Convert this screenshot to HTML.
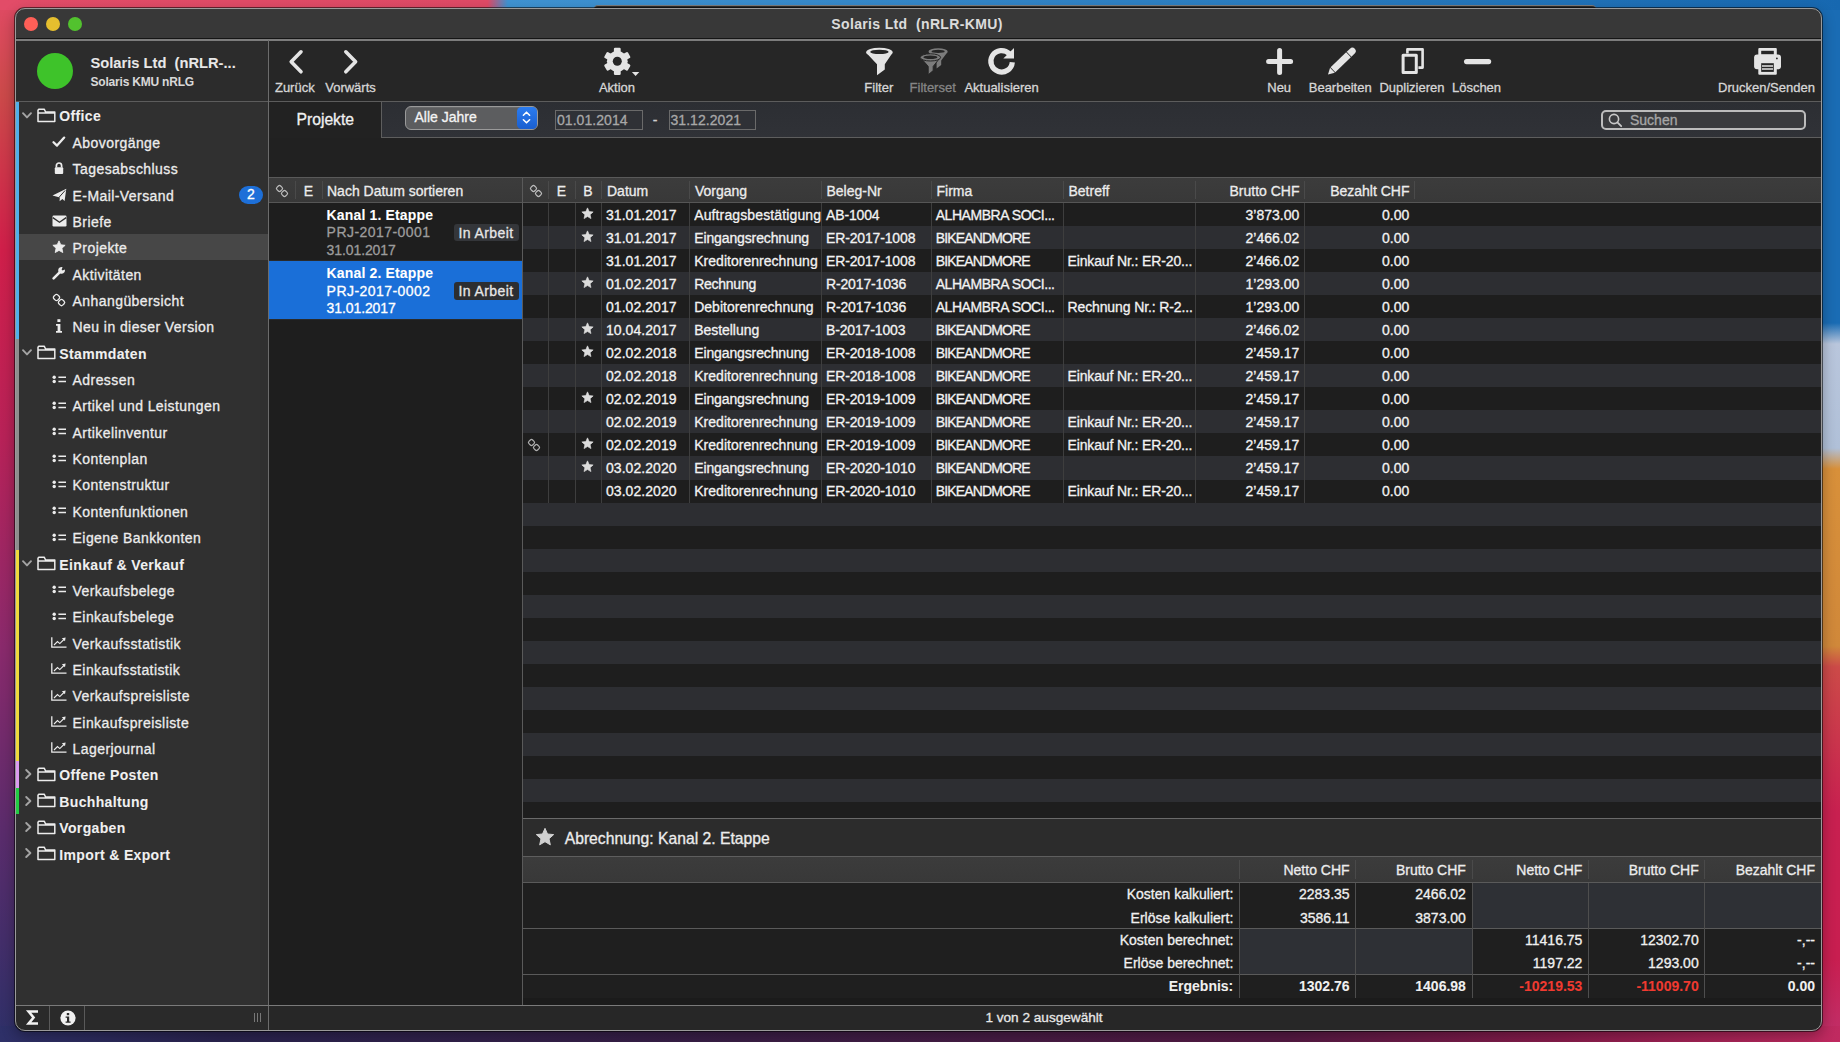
<!DOCTYPE html><html><head><meta charset="utf-8"><style>
*{margin:0;padding:0;box-sizing:border-box}
html,body{width:1840px;height:1042px;overflow:hidden}
body{position:relative;font-family:"Liberation Sans",sans-serif;background:#b02a5a}
div{position:absolute}
.t{white-space:pre;-webkit-text-stroke:0.3px currentColor}
.b{-webkit-text-stroke:0.05px currentColor}
svg{position:absolute;overflow:visible}
</style></head><body><div style="left:0;top:0;width:1840px;height:1042px;background:linear-gradient(180deg,#e04a64 0%,#cc4a4a 9%,#d01f4a 24%,#b82258 42%,#8a2a6c 62%,#5a2c6c 80%,#2e3068 100%)"></div>
<div style="left:1700px;top:0;width:140px;height:1042px;background:linear-gradient(180deg,#1a6cb4 0%,#1a6cb4 31%,#b9c6dc 33%,#b0c0d8 43%,#d8903a 45%,#d0883a 62%,#cc4a48 64%,#c82050 78%,#c81e50 92%,#c0306a 100%)"></div>
<div style="left:0;top:0;width:1840px;height:10px;background:linear-gradient(93deg,#e24c68 0%,#df4a66 26.5%,#3f93d2 27.6%,#2a7cc0 70%,#1768b0 100%)"></div>
<div style="left:0;top:1026px;width:1840px;height:16px;background:linear-gradient(90deg,#2e3068 0%,#2a2450 12%,#3a1e46 40%,#561a44 70%,#8a1c4c 85%,#c02a60 100%)"></div>
<div style="left:594px;top:5px;width:1002px;height:10px;background:#2b2b2b;border-radius:4px 4px 0 0;border-top:1px solid #7a7a7a"></div>
<div id="win" style="left:15px;top:8px;width:1807px;height:1023px;border-radius:10px;overflow:hidden;background:#1f1f1f">
<div style="left:-15px;top:-8px;width:1840px;height:1042px">
<div style="left:15px;top:8px;width:1807px;height:31px;background:#383838"></div>
<div style="left:15px;top:38px;width:1807px;height:1px;background:#151515"></div>
<div style="left:15px;top:39px;width:1807px;height:1.5px;background:#7c7c7c"></div>
<div style="left:23.7px;top:16.8px;width:14px;height:14px;border-radius:50%;background:#fe5f57"></div>
<div style="left:45.7px;top:16.8px;width:14px;height:14px;border-radius:50%;background:#e6bf2e"></div>
<div style="left:67.7px;top:16.8px;width:14px;height:14px;border-radius:50%;background:#52c22e"></div>
<div class="t b" style="top:15.75px;font-size:14px;line-height:16.8px;font-weight:700;color:#dcdcdc;letter-spacing:0.35px;left:517px;width:800px;text-align:center;">Solaris Ltd  (nRLR-KMU)</div>
<div style="left:15px;top:40.5px;width:253px;height:61px;background:#2c2c2c"></div>
<div style="left:269px;top:40.5px;width:1553px;height:61px;background:#262626"></div>
<div style="left:15px;top:101px;width:1807px;height:1px;background:#5c5c5c"></div>
<div style="left:268px;top:40px;width:1px;height:990px;background:#6c6c6c"></div>
<div style="left:37px;top:53px;width:36px;height:36px;border-radius:50%;background:#3ec32a"></div>
<div class="t b" style="top:54.89px;font-size:14.7px;line-height:17.64px;font-weight:700;color:#e8e8e8;left:90.5px;">Solaris Ltd  (nRLR-...</div>
<div class="t b" style="top:74.64px;font-size:12px;line-height:14.4px;font-weight:700;color:#d8d8d8;letter-spacing:-0.2px;left:90.5px;">Solaris KMU nRLG</div>
<div style="left:15px;top:102px;width:253px;height:903px;background:#303030"></div>
<div style="left:19px;top:234.0px;width:249px;height:26.36px;background:#474747"></div>
<div style="left:16px;top:102.2px;width:3px;height:237.24px;background:#4fb0ec"></div>
<div style="left:16px;top:339.44px;width:3px;height:210.88px;background:#8e8e8e"></div>
<div style="left:16px;top:550.32px;width:3px;height:210.88px;background:#f0da3c"></div>
<div style="left:16px;top:761.2px;width:3px;height:26.36px;background:#dc9cf0"></div>
<div style="left:16px;top:787.5600000000001px;width:3px;height:26.36px;background:#22cc44"></div>
<svg style="left:22.2px;top:111.7px" width="10" height="7" viewBox="0 0 10 7"><path d="M1 1.2 L5 5.4 L9 1.2" fill="none" stroke="#a4a4a4" stroke-width="1.9" stroke-linecap="round" stroke-linejoin="round"/></svg>
<svg style="left:36.5px;top:108.0px" width="19" height="15" viewBox="0 0 19 15"><path d="M1 2.2 V13.6 H17.8 V4 H8.6 L7.2 1.2 H1.8 Z M1 5 H17.8" fill="none" stroke="#ececec" stroke-width="1.5" stroke-linejoin="round"/></svg>
<div class="t b" style="top:108.45px;font-size:14px;line-height:16.8px;font-weight:700;color:#f0f0f0;letter-spacing:0.35px;left:59.3px;">Office</div>
<svg style="left:52px;top:134.56px" width="14" height="14" viewBox="0 0 14 14"><path d="M1.5 7.2 L5 10.6 L12.2 2.6" fill="none" stroke="#ececec" stroke-width="2.3" stroke-linecap="round" stroke-linejoin="round"/></svg>
<div class="t" style="top:134.81px;font-size:14px;line-height:16.8px;font-weight:400;color:#ececec;letter-spacing:0.42px;left:72.6px;">Abovorgänge</div>
<svg style="left:52px;top:160.92000000000002px" width="14" height="14" viewBox="0 0 14 14"><path d="M4.4 6.5 V4.6 A2.6 2.6 0 0 1 9.6 4.6 V6.5" fill="none" stroke="#ececec" stroke-width="1.7"/><rect x="2.8" y="6.3" width="8.4" height="6.6" rx="1" fill="#ececec"/></svg>
<div class="t" style="top:161.17px;font-size:14px;line-height:16.8px;font-weight:400;color:#ececec;letter-spacing:0.42px;left:72.6px;">Tagesabschluss</div>
<svg style="left:51.5px;top:187.78px" width="15" height="14" viewBox="0 0 15 14"><path d="M0.5 7.6 L14.3 0.8 L12.6 13 L10.4 11 L7.6 13.2 L7.8 9.4 Z" fill="#ececec"/><path d="M6.8 9.6 L13.2 2.4" stroke="#2e2e2e" stroke-width="1"/></svg>
<div class="t" style="top:187.53px;font-size:14px;line-height:16.8px;font-weight:400;color:#ececec;letter-spacing:0.42px;left:72.6px;">E-Mail-Versand</div>
<svg style="left:51.5px;top:214.83999999999997px" width="15" height="12" viewBox="0 0 15 12"><rect x="0.5" y="0.5" width="14" height="11" rx="1.2" fill="#ececec"/><path d="M0.8 2.6 L7.5 7.2 L14.2 2.6" fill="none" stroke="#2e2e2e" stroke-width="1.3"/></svg>
<div class="t" style="top:213.89px;font-size:14px;line-height:16.8px;font-weight:400;color:#ececec;letter-spacing:0.42px;left:72.6px;">Briefe</div>
<svg style="left:51.5px;top:240.0px" width="14" height="14" viewBox="0 0 24 24"><path d="M12 1.5 L15.1 8.3 L22.5 9.1 L17 14.1 L18.5 21.5 L12 17.8 L5.5 21.5 L7 14.1 L1.5 9.1 L8.9 8.3 Z" fill="#ececec" stroke="#ececec" stroke-width="1.5" stroke-linejoin="round"/></svg>
<div class="t" style="top:240.25px;font-size:14px;line-height:16.8px;font-weight:400;color:#ececec;letter-spacing:0.42px;left:72.6px;">Projekte</div>
<svg style="left:51.8px;top:266.36px" width="14" height="14" viewBox="0 0 14 14"><path d="M1.6 12.4 L7.4 6.6" stroke="#ececec" stroke-width="2.6" stroke-linecap="round"/><path d="M10.6 1.2 A3.4 3.4 0 1 0 12.8 3.4 L10.6 4.4 L9.6 3.4 Z" fill="#ececec"/></svg>
<div class="t" style="top:266.61px;font-size:14px;line-height:16.8px;font-weight:400;color:#ececec;letter-spacing:0.42px;left:72.6px;">Aktivitäten</div>
<svg style="left:51.8px;top:292.71999999999997px" width="14" height="14" viewBox="0 0 14 14"><rect x="1.8" y="1.8" width="5.4" height="5.4" rx="1.7" transform="rotate(45 4.5 4.5)" fill="none" stroke="#ececec" stroke-width="1.3"/><rect x="6.8" y="6.8" width="5.4" height="5.4" rx="1.7" transform="rotate(45 9.5 9.5)" fill="none" stroke="#ececec" stroke-width="1.3"/></svg>
<div class="t" style="top:292.97px;font-size:14px;line-height:16.8px;font-weight:400;color:#ececec;letter-spacing:0.42px;left:72.6px;">Anhangübersicht</div>
<svg style="left:55px;top:319.28px" width="8" height="14" viewBox="0 0 8 14"><rect x="2.4" y="0.2" width="3" height="2.8" fill="#ececec"/><path d="M1 5 H5.4 V12 H7 V13.8 H1 V12 H2.6 V6.8 H1 Z" fill="#ececec"/></svg>
<div class="t" style="top:319.33px;font-size:14px;line-height:16.8px;font-weight:400;color:#ececec;letter-spacing:0.42px;left:72.6px;">Neu in dieser Version</div>
<svg style="left:22.2px;top:348.94px" width="10" height="7" viewBox="0 0 10 7"><path d="M1 1.2 L5 5.4 L9 1.2" fill="none" stroke="#a4a4a4" stroke-width="1.9" stroke-linecap="round" stroke-linejoin="round"/></svg>
<svg style="left:36.5px;top:345.24px" width="19" height="15" viewBox="0 0 19 15"><path d="M1 2.2 V13.6 H17.8 V4 H8.6 L7.2 1.2 H1.8 Z M1 5 H17.8" fill="none" stroke="#ececec" stroke-width="1.5" stroke-linejoin="round"/></svg>
<div class="t b" style="top:345.69px;font-size:14px;line-height:16.8px;font-weight:700;color:#f0f0f0;letter-spacing:0.35px;left:59.3px;">Stammdaten</div>
<svg style="left:52px;top:374.6px" width="15" height="9" viewBox="0 0 15 9"><circle cx="2.2" cy="2.3" r="1.7" fill="#ececec"/><circle cx="2.2" cy="6.5" r="1.7" fill="#ececec"/><path d="M6.4 2.3 H14 M6.4 6.5 H14" stroke="#ececec" stroke-width="1.6"/></svg>
<div class="t" style="top:372.05px;font-size:14px;line-height:16.8px;font-weight:400;color:#ececec;letter-spacing:0.42px;left:72.6px;">Adressen</div>
<svg style="left:52px;top:400.96px" width="15" height="9" viewBox="0 0 15 9"><circle cx="2.2" cy="2.3" r="1.7" fill="#ececec"/><circle cx="2.2" cy="6.5" r="1.7" fill="#ececec"/><path d="M6.4 2.3 H14 M6.4 6.5 H14" stroke="#ececec" stroke-width="1.6"/></svg>
<div class="t" style="top:398.41px;font-size:14px;line-height:16.8px;font-weight:400;color:#ececec;letter-spacing:0.42px;left:72.6px;">Artikel und Leistungen</div>
<svg style="left:52px;top:427.32px" width="15" height="9" viewBox="0 0 15 9"><circle cx="2.2" cy="2.3" r="1.7" fill="#ececec"/><circle cx="2.2" cy="6.5" r="1.7" fill="#ececec"/><path d="M6.4 2.3 H14 M6.4 6.5 H14" stroke="#ececec" stroke-width="1.6"/></svg>
<div class="t" style="top:424.77px;font-size:14px;line-height:16.8px;font-weight:400;color:#ececec;letter-spacing:0.42px;left:72.6px;">Artikelinventur</div>
<svg style="left:52px;top:453.68px" width="15" height="9" viewBox="0 0 15 9"><circle cx="2.2" cy="2.3" r="1.7" fill="#ececec"/><circle cx="2.2" cy="6.5" r="1.7" fill="#ececec"/><path d="M6.4 2.3 H14 M6.4 6.5 H14" stroke="#ececec" stroke-width="1.6"/></svg>
<div class="t" style="top:451.13px;font-size:14px;line-height:16.8px;font-weight:400;color:#ececec;letter-spacing:0.42px;left:72.6px;">Kontenplan</div>
<svg style="left:52px;top:480.03999999999996px" width="15" height="9" viewBox="0 0 15 9"><circle cx="2.2" cy="2.3" r="1.7" fill="#ececec"/><circle cx="2.2" cy="6.5" r="1.7" fill="#ececec"/><path d="M6.4 2.3 H14 M6.4 6.5 H14" stroke="#ececec" stroke-width="1.6"/></svg>
<div class="t" style="top:477.49px;font-size:14px;line-height:16.8px;font-weight:400;color:#ececec;letter-spacing:0.42px;left:72.6px;">Kontenstruktur</div>
<svg style="left:52px;top:506.4px" width="15" height="9" viewBox="0 0 15 9"><circle cx="2.2" cy="2.3" r="1.7" fill="#ececec"/><circle cx="2.2" cy="6.5" r="1.7" fill="#ececec"/><path d="M6.4 2.3 H14 M6.4 6.5 H14" stroke="#ececec" stroke-width="1.6"/></svg>
<div class="t" style="top:503.85px;font-size:14px;line-height:16.8px;font-weight:400;color:#ececec;letter-spacing:0.42px;left:72.6px;">Kontenfunktionen</div>
<svg style="left:52px;top:532.76px" width="15" height="9" viewBox="0 0 15 9"><circle cx="2.2" cy="2.3" r="1.7" fill="#ececec"/><circle cx="2.2" cy="6.5" r="1.7" fill="#ececec"/><path d="M6.4 2.3 H14 M6.4 6.5 H14" stroke="#ececec" stroke-width="1.6"/></svg>
<div class="t" style="top:530.21px;font-size:14px;line-height:16.8px;font-weight:400;color:#ececec;letter-spacing:0.42px;left:72.6px;">Eigene Bankkonten</div>
<svg style="left:22.2px;top:559.82px" width="10" height="7" viewBox="0 0 10 7"><path d="M1 1.2 L5 5.4 L9 1.2" fill="none" stroke="#a4a4a4" stroke-width="1.9" stroke-linecap="round" stroke-linejoin="round"/></svg>
<svg style="left:36.5px;top:556.12px" width="19" height="15" viewBox="0 0 19 15"><path d="M1 2.2 V13.6 H17.8 V4 H8.6 L7.2 1.2 H1.8 Z M1 5 H17.8" fill="none" stroke="#ececec" stroke-width="1.5" stroke-linejoin="round"/></svg>
<div class="t b" style="top:556.57px;font-size:14px;line-height:16.8px;font-weight:700;color:#f0f0f0;letter-spacing:0.35px;left:59.3px;">Einkauf &amp; Verkauf</div>
<svg style="left:52px;top:585.48px" width="15" height="9" viewBox="0 0 15 9"><circle cx="2.2" cy="2.3" r="1.7" fill="#ececec"/><circle cx="2.2" cy="6.5" r="1.7" fill="#ececec"/><path d="M6.4 2.3 H14 M6.4 6.5 H14" stroke="#ececec" stroke-width="1.6"/></svg>
<div class="t" style="top:582.93px;font-size:14px;line-height:16.8px;font-weight:400;color:#ececec;letter-spacing:0.42px;left:72.6px;">Verkaufsbelege</div>
<svg style="left:52px;top:611.8399999999999px" width="15" height="9" viewBox="0 0 15 9"><circle cx="2.2" cy="2.3" r="1.7" fill="#ececec"/><circle cx="2.2" cy="6.5" r="1.7" fill="#ececec"/><path d="M6.4 2.3 H14 M6.4 6.5 H14" stroke="#ececec" stroke-width="1.6"/></svg>
<div class="t" style="top:609.29px;font-size:14px;line-height:16.8px;font-weight:400;color:#ececec;letter-spacing:0.42px;left:72.6px;">Einkaufsbelege</div>
<svg style="left:50.8px;top:637.0000000000001px" width="16" height="11" viewBox="0 0 16 11"><path d="M0.8 0.3 V10.2 H15.5" fill="none" stroke="#ececec" stroke-width="1.3"/><path d="M3 8 L6.5 4.6 L8.8 6.6 L13.4 2" fill="none" stroke="#ececec" stroke-width="1.1"/><path d="M10.8 1.2 L14.6 0.4 L14 4.2 Z" fill="#ececec"/></svg>
<div class="t" style="top:635.65px;font-size:14px;line-height:16.8px;font-weight:400;color:#ececec;letter-spacing:0.42px;left:72.6px;">Verkaufsstatistik</div>
<svg style="left:50.8px;top:663.36px" width="16" height="11" viewBox="0 0 16 11"><path d="M0.8 0.3 V10.2 H15.5" fill="none" stroke="#ececec" stroke-width="1.3"/><path d="M3 8 L6.5 4.6 L8.8 6.6 L13.4 2" fill="none" stroke="#ececec" stroke-width="1.1"/><path d="M10.8 1.2 L14.6 0.4 L14 4.2 Z" fill="#ececec"/></svg>
<div class="t" style="top:662.01px;font-size:14px;line-height:16.8px;font-weight:400;color:#ececec;letter-spacing:0.42px;left:72.6px;">Einkaufsstatistik</div>
<svg style="left:50.8px;top:689.72px" width="16" height="11" viewBox="0 0 16 11"><path d="M0.8 0.3 V10.2 H15.5" fill="none" stroke="#ececec" stroke-width="1.3"/><path d="M3 8 L6.5 4.6 L8.8 6.6 L13.4 2" fill="none" stroke="#ececec" stroke-width="1.1"/><path d="M10.8 1.2 L14.6 0.4 L14 4.2 Z" fill="#ececec"/></svg>
<div class="t" style="top:688.37px;font-size:14px;line-height:16.8px;font-weight:400;color:#ececec;letter-spacing:0.42px;left:72.6px;">Verkaufspreisliste</div>
<svg style="left:50.8px;top:716.08px" width="16" height="11" viewBox="0 0 16 11"><path d="M0.8 0.3 V10.2 H15.5" fill="none" stroke="#ececec" stroke-width="1.3"/><path d="M3 8 L6.5 4.6 L8.8 6.6 L13.4 2" fill="none" stroke="#ececec" stroke-width="1.1"/><path d="M10.8 1.2 L14.6 0.4 L14 4.2 Z" fill="#ececec"/></svg>
<div class="t" style="top:714.73px;font-size:14px;line-height:16.8px;font-weight:400;color:#ececec;letter-spacing:0.42px;left:72.6px;">Einkaufspreisliste</div>
<svg style="left:50.8px;top:742.44px" width="16" height="11" viewBox="0 0 16 11"><path d="M0.8 0.3 V10.2 H15.5" fill="none" stroke="#ececec" stroke-width="1.3"/><path d="M3 8 L6.5 4.6 L8.8 6.6 L13.4 2" fill="none" stroke="#ececec" stroke-width="1.1"/><path d="M10.8 1.2 L14.6 0.4 L14 4.2 Z" fill="#ececec"/></svg>
<div class="t" style="top:741.09px;font-size:14px;line-height:16.8px;font-weight:400;color:#ececec;letter-spacing:0.42px;left:72.6px;">Lagerjournal</div>
<svg style="left:24.5px;top:769.2px" width="7" height="10" viewBox="0 0 7 10"><path d="M1.2 1 L5.4 5 L1.2 9" fill="none" stroke="#a4a4a4" stroke-width="1.9" stroke-linecap="round" stroke-linejoin="round"/></svg>
<svg style="left:36.5px;top:767.0px" width="19" height="15" viewBox="0 0 19 15"><path d="M1 2.2 V13.6 H17.8 V4 H8.6 L7.2 1.2 H1.8 Z M1 5 H17.8" fill="none" stroke="#ececec" stroke-width="1.5" stroke-linejoin="round"/></svg>
<div class="t b" style="top:767.45px;font-size:14px;line-height:16.8px;font-weight:700;color:#f0f0f0;letter-spacing:0.35px;left:59.3px;">Offene Posten</div>
<svg style="left:24.5px;top:795.5600000000001px" width="7" height="10" viewBox="0 0 7 10"><path d="M1.2 1 L5.4 5 L1.2 9" fill="none" stroke="#a4a4a4" stroke-width="1.9" stroke-linecap="round" stroke-linejoin="round"/></svg>
<svg style="left:36.5px;top:793.36px" width="19" height="15" viewBox="0 0 19 15"><path d="M1 2.2 V13.6 H17.8 V4 H8.6 L7.2 1.2 H1.8 Z M1 5 H17.8" fill="none" stroke="#ececec" stroke-width="1.5" stroke-linejoin="round"/></svg>
<div class="t b" style="top:793.81px;font-size:14px;line-height:16.8px;font-weight:700;color:#f0f0f0;letter-spacing:0.35px;left:59.3px;">Buchhaltung</div>
<svg style="left:24.5px;top:821.9200000000001px" width="7" height="10" viewBox="0 0 7 10"><path d="M1.2 1 L5.4 5 L1.2 9" fill="none" stroke="#a4a4a4" stroke-width="1.9" stroke-linecap="round" stroke-linejoin="round"/></svg>
<svg style="left:36.5px;top:819.72px" width="19" height="15" viewBox="0 0 19 15"><path d="M1 2.2 V13.6 H17.8 V4 H8.6 L7.2 1.2 H1.8 Z M1 5 H17.8" fill="none" stroke="#ececec" stroke-width="1.5" stroke-linejoin="round"/></svg>
<div class="t b" style="top:820.17px;font-size:14px;line-height:16.8px;font-weight:700;color:#f0f0f0;letter-spacing:0.35px;left:59.3px;">Vorgaben</div>
<svg style="left:24.5px;top:848.28px" width="7" height="10" viewBox="0 0 7 10"><path d="M1.2 1 L5.4 5 L1.2 9" fill="none" stroke="#a4a4a4" stroke-width="1.9" stroke-linecap="round" stroke-linejoin="round"/></svg>
<svg style="left:36.5px;top:846.0799999999999px" width="19" height="15" viewBox="0 0 19 15"><path d="M1 2.2 V13.6 H17.8 V4 H8.6 L7.2 1.2 H1.8 Z M1 5 H17.8" fill="none" stroke="#ececec" stroke-width="1.5" stroke-linejoin="round"/></svg>
<div class="t b" style="top:846.53px;font-size:14px;line-height:16.8px;font-weight:700;color:#f0f0f0;letter-spacing:0.35px;left:59.3px;">Import &amp; Export</div>
<div style="left:239px;top:185.5px;width:24px;height:18px;border-radius:9px;background:#1d6fd8"></div>
<div class="t" style="top:186.25px;font-size:14px;line-height:16.8px;font-weight:400;color:#ffffff;left:-149px;width:800px;text-align:center;">2</div>
<div style="left:15px;top:1005px;width:253px;height:26px;background:#2a2a2a"></div>
<div style="left:15px;top:1005px;width:1807px;height:1px;background:#7a7a7a"></div>
<div style="left:49px;top:1006px;width:1px;height:24px;background:#5a5a5a"></div>
<div style="left:84px;top:1006px;width:1px;height:24px;background:#5a5a5a"></div>
<svg style="left:27px;top:1010px" width="12" height="16" viewBox="0 0 12 16"><path d="M11 1.6 H1.6 L6.6 7.6 L1.6 13.6 H11" fill="none" stroke="#f2f2f2" stroke-width="2.5" stroke-linejoin="miter" stroke-miterlimit="3"/></svg>
<svg style="left:60px;top:1010px" width="16" height="16" viewBox="0 0 16 16"><circle cx="8" cy="8" r="7.6" fill="#f0f0f0"/><rect x="6.8" y="3" width="2.4" height="2.2" fill="#2a2a2a"/><path d="M5.6 6.4 H9.2 V11.4 H10.6 V12.8 H5.6 V11.4 H7 V7.8 H5.6 Z" fill="#2a2a2a"/></svg>
<div style="left:254.0px;top:1013px;width:1.1px;height:9px;background:#777"></div>
<div style="left:256.8px;top:1013px;width:1.1px;height:9px;background:#777"></div>
<div style="left:259.6px;top:1013px;width:1.1px;height:9px;background:#777"></div>
<svg style="left:286px;top:49px" width="20" height="26" viewBox="0 0 20 26"><path d="M15 2.8 L5.2 12.8 L15 22.8" fill="none" stroke="#e4e4e4" stroke-width="3.6" stroke-linecap="round" stroke-linejoin="round"/></svg>
<div class="t" style="top:79.70px;font-size:13px;line-height:15.6px;font-weight:400;color:#d6d6d6;left:-105.19999999999999px;width:800px;text-align:center;">Zurück</div>
<svg style="left:341px;top:49px" width="20" height="26" viewBox="0 0 20 26"><path d="M4.8 2.8 L14.6 12.8 L4.8 22.8" fill="none" stroke="#e4e4e4" stroke-width="3.6" stroke-linecap="round" stroke-linejoin="round"/></svg>
<div class="t" style="top:79.70px;font-size:13px;line-height:15.6px;font-weight:400;color:#d6d6d6;left:-49.5px;width:800px;text-align:center;">Vorwärts</div>
<svg style="left:604px;top:48px" width="40" height="30" viewBox="-13.3 -13.3 40 30"><g><rect x="-3.4" y="-13.6" width="6.8" height="6" rx="1.2" transform="rotate(0)" fill="#e4e4e4"/><rect x="-3.4" y="-13.6" width="6.8" height="6" rx="1.2" transform="rotate(60)" fill="#e4e4e4"/><rect x="-3.4" y="-13.6" width="6.8" height="6" rx="1.2" transform="rotate(120)" fill="#e4e4e4"/><rect x="-3.4" y="-13.6" width="6.8" height="6" rx="1.2" transform="rotate(180)" fill="#e4e4e4"/><rect x="-3.4" y="-13.6" width="6.8" height="6" rx="1.2" transform="rotate(240)" fill="#e4e4e4"/><rect x="-3.4" y="-13.6" width="6.8" height="6" rx="1.2" transform="rotate(300)" fill="#e4e4e4"/><circle r="10.4" fill="#e4e4e4"/><circle r="4.5" fill="#262626"/></g><path d="M14.6 10.6 H22 L18.3 14.6 Z" fill="#e4e4e4"/></svg>
<div class="t" style="top:79.70px;font-size:13px;line-height:15.6px;font-weight:400;color:#d6d6d6;left:217px;width:800px;text-align:center;">Aktion</div>
<svg style="left:865px;top:47px" width="30" height="30" viewBox="0 0 30 30"><path d="M1.4 6 L12 17.2 V28.2 L19.8 22.4 V17.2 L27.4 6 Z" fill="#e4e4e4"/><ellipse cx="14.4" cy="5.2" rx="13.2" ry="4.4" fill="#e4e4e4"/><ellipse cx="14.4" cy="4.9" rx="9.2" ry="2.2" fill="#262626"/></svg>
<div class="t" style="top:79.70px;font-size:13px;line-height:15.6px;font-weight:400;color:#d6d6d6;left:478.79999999999995px;width:800px;text-align:center;">Filter</div>
<svg style="left:919px;top:47px" width="30" height="30" viewBox="0 0 30 30"><path d="M9.6 5 L17.6 13.6 V21.6 L22.2 18 V13.6 L28.6 5 Z" fill="#7c7c7c"/><ellipse cx="19.1" cy="4.6" rx="9.6" ry="3.4" fill="#7c7c7c"/><ellipse cx="19.1" cy="4.4" rx="6.6" ry="1.7" fill="#262626"/><path d="M1.6 10.6 L9.2 19.4 V27.8 L14.2 23.6 V19.4 L21.2 10.6 Z" fill="#7c7c7c" stroke="#262626" stroke-width="1"/><ellipse cx="11.4" cy="10.4" rx="10.2" ry="3.6" fill="#7c7c7c" stroke="#262626" stroke-width="1"/><ellipse cx="11.4" cy="10.2" rx="7" ry="1.8" fill="#262626"/></svg>
<div class="t" style="top:79.70px;font-size:13px;line-height:15.6px;font-weight:400;color:#858585;left:532.7px;width:800px;text-align:center;">Filterset</div>
<svg style="left:986px;top:47px" width="30" height="30" viewBox="0 0 30 30"><path d="M23.2 6.7 A10.75 10.75 0 1 0 26.31 15.24" fill="none" stroke="#e4e4e4" stroke-width="5.2"/><path d="M28 0.9 V11.4 H17.3 Z" fill="#e4e4e4"/></svg>
<div class="t" style="top:79.70px;font-size:13px;line-height:15.6px;font-weight:400;color:#d6d6d6;left:601.6px;width:800px;text-align:center;">Aktualisieren</div>
<svg style="left:1265px;top:47px" width="30" height="29" viewBox="0 0 30 29"><path d="M14.6 3.4 V25.4 M3.6 14.4 H25.6" stroke="#e4e4e4" stroke-width="5" stroke-linecap="round"/></svg>
<div class="t" style="top:79.70px;font-size:13px;line-height:15.6px;font-weight:400;color:#d6d6d6;left:879.2px;width:800px;text-align:center;">Neu</div>
<svg style="left:1327px;top:47px" width="30" height="30" viewBox="0 0 30 30"><g transform="translate(1 27.6) rotate(-44)"><path d="M0 0 L6.2 -3.4 V3.4 Z" fill="#e4e4e4"/><rect x="6.9" y="-3.4" width="21.6" height="6.8" fill="#e4e4e4"/><path d="M29.3 -3.4 H33.8 A3.4 3.4 0 0 1 33.8 3.4 H29.3 Z" fill="#e4e4e4"/></g></svg>
<div class="t" style="top:79.70px;font-size:13px;line-height:15.6px;font-weight:400;color:#d6d6d6;left:940.2px;width:800px;text-align:center;">Bearbeiten</div>
<svg style="left:1400px;top:47px" width="26" height="29" viewBox="0 0 26 29"><path d="M7.4 6.4 V2.4 H22.6 V20.6 H18.4" fill="none" stroke="#e4e4e4" stroke-width="2.6" stroke-linejoin="round"/><rect x="3.1" y="8.2" width="13.2" height="17.4" fill="none" stroke="#e4e4e4" stroke-width="3" stroke-linejoin="round"/></svg>
<div class="t" style="top:79.70px;font-size:13px;line-height:15.6px;font-weight:400;color:#d6d6d6;left:1012px;width:800px;text-align:center;">Duplizieren</div>
<svg style="left:1462px;top:47px" width="30" height="29" viewBox="0 0 30 29"><path d="M4.6 14.6 H26.6" stroke="#e4e4e4" stroke-width="5.2" stroke-linecap="round"/></svg>
<div class="t" style="top:79.70px;font-size:13px;line-height:15.6px;font-weight:400;color:#d6d6d6;left:1076.5px;width:800px;text-align:center;">Löschen</div>
<svg style="left:1752px;top:47px" width="32" height="30" viewBox="0 0 32 30"><rect x="6.3" y="1" width="18.5" height="8" rx="1" fill="#e4e4e4"/><rect x="9.2" y="3.8" width="12.6" height="3.6" fill="#262626"/><rect x="2.1" y="7.6" width="26.9" height="14.6" rx="3" fill="#e4e4e4"/><rect x="6.3" y="15.5" width="18.5" height="12.3" rx="1" fill="#e4e4e4"/><rect x="9.2" y="16.2" width="12.6" height="8.7" fill="#262626"/><path d="M10 19 H21 M10 22 H21" stroke="#e4e4e4" stroke-width="1.3"/><circle cx="24.9" cy="11.4" r="0.9" fill="#262626"/></svg>
<div class="t" style="top:79.70px;font-size:13px;line-height:15.6px;font-weight:400;color:#d6d6d6;left:1366.5px;width:800px;text-align:center;">Drucken/Senden</div>
<div style="left:269px;top:102px;width:1553px;height:36px;background:#222222"></div>
<div style="left:381px;top:102px;width:1441px;height:36px;background:linear-gradient(180deg,#2c2e33,#303237)"></div>
<div style="left:381px;top:102px;width:1px;height:36px;background:#5e5e5e"></div>
<div style="left:381px;top:137px;width:1441px;height:1px;background:#5e5e5e"></div>
<div class="t" style="top:111.34px;font-size:15.7px;line-height:18.84px;font-weight:400;color:#f0f0f0;left:296.5px;">Projekte</div>
<div style="left:404.5px;top:105.5px;width:133.5px;height:24.5px;border-radius:6px;background:#5c5d5f;border:1.5px solid #9a9a9a;box-shadow:inset 0 1px 0 rgba(255,255,255,.08)"></div>
<div style="left:516.5px;top:107px;width:20px;height:21.5px;border-radius:4.5px;background:linear-gradient(180deg,#2b7cf0,#1a5fd0)"></div>
<svg style="left:520px;top:109px" width="13" height="17" viewBox="0 0 13 17"><path d="M3.4 6.2 L6.5 3.2 L9.6 6.2 M3.4 10.8 L6.5 13.8 L9.6 10.8" fill="none" stroke="#fff" stroke-width="1.6" stroke-linecap="round" stroke-linejoin="round"/></svg>
<div class="t" style="top:109.25px;font-size:14px;line-height:16.8px;font-weight:400;color:#f4f4f4;left:414.5px;">Alle Jahre</div>
<div style="left:555px;top:110px;width:87.5px;height:20px;border:1px solid #6a6a6a;background:#2f3136"></div>
<div class="t" style="top:112.25px;font-size:14px;line-height:16.8px;font-weight:400;color:#a8a8a8;letter-spacing:0.05px;left:557px;">01.01.2014</div>
<div class="t" style="top:111.75px;font-size:14px;line-height:16.8px;font-weight:400;color:#cfcfcf;left:255px;width:800px;text-align:center;">-</div>
<div style="left:668.5px;top:110px;width:87.5px;height:20px;border:1px solid #6a6a6a;background:#2f3136"></div>
<div class="t" style="top:112.25px;font-size:14px;line-height:16.8px;font-weight:400;color:#a8a8a8;letter-spacing:0.05px;left:670.5px;">31.12.2021</div>
<div style="left:1601px;top:109.5px;width:205px;height:20.5px;border-radius:5px;border:2px solid #bcbcbc;background:#3a3b3e"></div>
<svg style="left:1608px;top:112.5px" width="15" height="15" viewBox="0 0 15 15"><circle cx="6" cy="6" r="4.6" fill="none" stroke="#c8c8c8" stroke-width="1.6"/><path d="M9.4 9.4 L13.2 13.2" stroke="#c8c8c8" stroke-width="1.8" stroke-linecap="round"/></svg>
<div class="t" style="top:111.75px;font-size:14px;line-height:16.8px;font-weight:400;color:#a6a6a6;left:1630px;">Suchen</div>
<div style="left:269px;top:138px;width:1553px;height:39px;background:#212121"></div>
<div style="left:269px;top:177px;width:1553px;height:1px;background:#5a5a5a"></div>
<div style="left:269px;top:178px;width:1553px;height:24.5px;background:linear-gradient(180deg,#3c3c3c,#383838)"></div>
<div style="left:269px;top:202px;width:1553px;height:1px;background:#565656"></div>
<svg style="left:275px;top:183.5px" width="14" height="14" viewBox="0 0 14 14"><rect x="1.9" y="1.9" width="5.2" height="5.2" rx="1.6" transform="rotate(45 4.5 4.5)" fill="none" stroke="#bdbdbd" stroke-width="1.2"/><rect x="6.9" y="6.9" width="5.2" height="5.2" rx="1.6" transform="rotate(45 9.5 9.5)" fill="none" stroke="#bdbdbd" stroke-width="1.2"/></svg>
<div style="left:295px;top:181px;width:1px;height:18px;background:#4a4a4a"></div>
<div style="left:321.5px;top:181px;width:1px;height:18px;background:#4a4a4a"></div>
<div class="t" style="top:182.95px;font-size:14px;line-height:16.8px;font-weight:400;color:#ececec;left:-91.5px;width:800px;text-align:center;">E</div>
<div class="t" style="top:182.95px;font-size:14px;line-height:16.8px;font-weight:400;color:#ececec;left:327px;">Nach Datum sortieren</div>
<div style="left:522px;top:178px;width:1px;height:827px;background:#5a5a5a"></div>
<svg style="left:529px;top:183.5px" width="14" height="14" viewBox="0 0 14 14"><rect x="1.9" y="1.9" width="5.2" height="5.2" rx="1.6" transform="rotate(45 4.5 4.5)" fill="none" stroke="#bdbdbd" stroke-width="1.2"/><rect x="6.9" y="6.9" width="5.2" height="5.2" rx="1.6" transform="rotate(45 9.5 9.5)" fill="none" stroke="#bdbdbd" stroke-width="1.2"/></svg>
<div style="left:548px;top:181px;width:1px;height:18px;background:#4a4a4a"></div>
<div style="left:575px;top:181px;width:1px;height:18px;background:#4a4a4a"></div>
<div style="left:601px;top:181px;width:1px;height:18px;background:#4a4a4a"></div>
<div style="left:689px;top:181px;width:1px;height:18px;background:#4a4a4a"></div>
<div style="left:821px;top:181px;width:1px;height:18px;background:#4a4a4a"></div>
<div style="left:931px;top:181px;width:1px;height:18px;background:#4a4a4a"></div>
<div style="left:1063px;top:181px;width:1px;height:18px;background:#4a4a4a"></div>
<div style="left:1195px;top:181px;width:1px;height:18px;background:#4a4a4a"></div>
<div style="left:1304px;top:181px;width:1px;height:18px;background:#4a4a4a"></div>
<div style="left:1414px;top:181px;width:1px;height:18px;background:#4a4a4a"></div>
<div class="t" style="top:182.95px;font-size:14px;line-height:16.8px;font-weight:400;color:#ececec;left:161.5px;width:800px;text-align:center;">E</div>
<div class="t" style="top:182.95px;font-size:14px;line-height:16.8px;font-weight:400;color:#ececec;left:188px;width:800px;text-align:center;">B</div>
<div class="t" style="top:182.95px;font-size:14px;line-height:16.8px;font-weight:400;color:#ececec;left:607px;">Datum</div>
<div class="t" style="top:182.95px;font-size:14px;line-height:16.8px;font-weight:400;color:#ececec;left:695px;">Vorgang</div>
<div class="t" style="top:182.95px;font-size:14px;line-height:16.8px;font-weight:400;color:#ececec;left:826.5px;">Beleg-Nr</div>
<div class="t" style="top:182.95px;font-size:14px;line-height:16.8px;font-weight:400;color:#ececec;left:936.5px;">Firma</div>
<div class="t" style="top:182.95px;font-size:14px;line-height:16.8px;font-weight:400;color:#ececec;left:1068.5px;">Betreff</div>
<div class="t" style="top:182.95px;font-size:14px;line-height:16.8px;font-weight:400;color:#ececec;left:699.5px;width:600px;text-align:right;">Brutto CHF</div>
<div class="t" style="top:182.95px;font-size:14px;line-height:16.8px;font-weight:400;color:#ececec;left:809.5px;width:600px;text-align:right;">Bezahlt CHF</div>
<div style="left:269px;top:203px;width:253px;height:802px;background:#1e1e1e"></div>
<div style="left:269px;top:261px;width:253px;height:57.5px;background:#1a6fd8"></div>
<div style="left:269px;top:260px;width:253px;height:1px;background:#2a2a2a"></div>
<div style="left:269px;top:318.5px;width:253px;height:1px;background:#2a2a2a"></div>
<div class="t b" style="top:206.55px;font-size:14px;line-height:16.8px;font-weight:700;color:#ffffff;letter-spacing:0.15px;left:326.6px;">Kanal 1. Etappe</div>
<div class="t" style="top:224.05px;font-size:14px;line-height:16.8px;font-weight:400;color:#9c9c9c;letter-spacing:0.45px;left:326.6px;">PRJ-2017-0001</div>
<div class="t" style="top:241.95px;font-size:14px;line-height:16.8px;font-weight:400;color:#9c9c9c;letter-spacing:-0.1px;left:326.6px;">31.01.2017</div>
<div style="left:453.5px;top:223.8px;width:65px;height:17.5px;border-radius:3px;background:#34363a"></div>
<div class="t" style="top:224.95px;font-size:14px;line-height:16.8px;font-weight:400;color:#e6e6e6;letter-spacing:0.4px;left:86px;width:800px;text-align:center;">In Arbeit</div>
<div class="t b" style="top:265.05px;font-size:14px;line-height:16.8px;font-weight:700;color:#ffffff;letter-spacing:0.15px;left:326.6px;">Kanal 2. Etappe</div>
<div class="t" style="top:282.55px;font-size:14px;line-height:16.8px;font-weight:400;color:#ffffff;letter-spacing:0.45px;left:326.6px;">PRJ-2017-0002</div>
<div class="t" style="top:300.45px;font-size:14px;line-height:16.8px;font-weight:400;color:#ffffff;letter-spacing:-0.1px;left:326.6px;">31.01.2017</div>
<div style="left:453.5px;top:282.3px;width:65px;height:17.5px;border-radius:3px;background:#2c2e31"></div>
<div class="t" style="top:283.45px;font-size:14px;line-height:16.8px;font-weight:400;color:#e6e6e6;letter-spacing:0.4px;left:86px;width:800px;text-align:center;">In Arbeit</div>
<div style="left:523px;top:202.8px;width:1299px;height:23.56px;background:#1e1e1e"></div>
<div style="left:523px;top:225.86px;width:1299px;height:23.56px;background:#2d2e32"></div>
<div style="left:523px;top:248.92000000000002px;width:1299px;height:23.56px;background:#1e1e1e"></div>
<div style="left:523px;top:271.98px;width:1299px;height:23.56px;background:#2d2e32"></div>
<div style="left:523px;top:295.04px;width:1299px;height:23.56px;background:#1e1e1e"></div>
<div style="left:523px;top:318.1px;width:1299px;height:23.56px;background:#2d2e32"></div>
<div style="left:523px;top:341.15999999999997px;width:1299px;height:23.56px;background:#1e1e1e"></div>
<div style="left:523px;top:364.22px;width:1299px;height:23.56px;background:#2d2e32"></div>
<div style="left:523px;top:387.28px;width:1299px;height:23.56px;background:#1e1e1e"></div>
<div style="left:523px;top:410.34000000000003px;width:1299px;height:23.56px;background:#2d2e32"></div>
<div style="left:523px;top:433.4px;width:1299px;height:23.56px;background:#1e1e1e"></div>
<div style="left:523px;top:456.46000000000004px;width:1299px;height:23.56px;background:#2d2e32"></div>
<div style="left:523px;top:479.52px;width:1299px;height:23.56px;background:#1e1e1e"></div>
<div style="left:523px;top:502.58px;width:1299px;height:23.56px;background:#2d2e32"></div>
<div style="left:523px;top:525.64px;width:1299px;height:23.56px;background:#1e1e1e"></div>
<div style="left:523px;top:548.7px;width:1299px;height:23.56px;background:#2d2e32"></div>
<div style="left:523px;top:571.76px;width:1299px;height:23.56px;background:#1e1e1e"></div>
<div style="left:523px;top:594.8199999999999px;width:1299px;height:23.56px;background:#2d2e32"></div>
<div style="left:523px;top:617.88px;width:1299px;height:23.56px;background:#1e1e1e"></div>
<div style="left:523px;top:640.94px;width:1299px;height:23.56px;background:#2d2e32"></div>
<div style="left:523px;top:664.0px;width:1299px;height:23.56px;background:#1e1e1e"></div>
<div style="left:523px;top:687.06px;width:1299px;height:23.56px;background:#2d2e32"></div>
<div style="left:523px;top:710.12px;width:1299px;height:23.56px;background:#1e1e1e"></div>
<div style="left:523px;top:733.1800000000001px;width:1299px;height:23.56px;background:#2d2e32"></div>
<div style="left:523px;top:756.24px;width:1299px;height:23.56px;background:#1e1e1e"></div>
<div style="left:523px;top:779.3px;width:1299px;height:23.56px;background:#2d2e32"></div>
<div style="left:523px;top:802.3599999999999px;width:1299px;height:16.1400000000001px;background:#1e1e1e"></div>
<div style="left:548px;top:202.8px;width:1px;height:299.78px;background:#3e3e3e"></div>
<div style="left:575px;top:202.8px;width:1px;height:299.78px;background:#3e3e3e"></div>
<div style="left:601px;top:202.8px;width:1px;height:299.78px;background:#3e3e3e"></div>
<div style="left:689px;top:202.8px;width:1px;height:299.78px;background:#3e3e3e"></div>
<div style="left:821px;top:202.8px;width:1px;height:299.78px;background:#3e3e3e"></div>
<div style="left:931px;top:202.8px;width:1px;height:299.78px;background:#3e3e3e"></div>
<div style="left:1063px;top:202.8px;width:1px;height:299.78px;background:#3e3e3e"></div>
<div style="left:1195px;top:202.8px;width:1px;height:299.78px;background:#3e3e3e"></div>
<div style="left:1304px;top:202.8px;width:1px;height:299.78px;background:#3e3e3e"></div>
<svg style="left:580.6px;top:206.70000000000002px" width="13" height="13" viewBox="0 0 24 24"><path d="M12 1.6 L15 8.4 L22.4 9.1 L16.8 14.1 L18.4 21.4 L12 17.6 L5.6 21.4 L7.2 14.1 L1.6 9.1 L9 8.4 Z" fill="#dcdcdc" stroke="#dcdcdc" stroke-width="1.2" stroke-linejoin="round"/></svg>
<div class="t" style="top:206.55px;font-size:14px;line-height:16.8px;font-weight:400;color:#f2f2f2;letter-spacing:0.05px;left:606px;">31.01.2017</div>
<div class="t" style="top:206.55px;font-size:14px;line-height:16.8px;font-weight:400;color:#f2f2f2;letter-spacing:0.13px;left:694.2px;width:127px;overflow:hidden">Auftragsbestätigung</div>
<div class="t" style="top:206.55px;font-size:14px;line-height:16.8px;font-weight:400;color:#f2f2f2;letter-spacing:-0.15px;left:826px;">AB-1004</div>
<div class="t" style="top:206.55px;font-size:14px;line-height:16.8px;font-weight:400;color:#f2f2f2;letter-spacing:-0.45px;left:935.7px;">ALHAMBRA SOCI...</div>
<div class="t" style="top:206.55px;font-size:14px;line-height:16.8px;font-weight:400;color:#f2f2f2;left:699.3px;width:600px;text-align:right;">3&#8217;873.00</div>
<div class="t" style="top:206.55px;font-size:14px;line-height:16.8px;font-weight:400;color:#f2f2f2;left:809.3px;width:600px;text-align:right;">0.00</div>
<svg style="left:580.6px;top:229.76000000000002px" width="13" height="13" viewBox="0 0 24 24"><path d="M12 1.6 L15 8.4 L22.4 9.1 L16.8 14.1 L18.4 21.4 L12 17.6 L5.6 21.4 L7.2 14.1 L1.6 9.1 L9 8.4 Z" fill="#dcdcdc" stroke="#dcdcdc" stroke-width="1.2" stroke-linejoin="round"/></svg>
<div class="t" style="top:229.61px;font-size:14px;line-height:16.8px;font-weight:400;color:#f2f2f2;letter-spacing:0.05px;left:606px;">31.01.2017</div>
<div class="t" style="top:229.61px;font-size:14px;line-height:16.8px;font-weight:400;color:#f2f2f2;letter-spacing:-0.12px;left:694.2px;width:127px;overflow:hidden">Eingangsrechnung</div>
<div class="t" style="top:229.61px;font-size:14px;line-height:16.8px;font-weight:400;color:#f2f2f2;letter-spacing:-0.15px;left:826px;">ER-2017-1008</div>
<div class="t" style="top:229.61px;font-size:14px;line-height:16.8px;font-weight:400;color:#f2f2f2;letter-spacing:-0.85px;left:935.7px;">BIKEANDMORE</div>
<div class="t" style="top:229.61px;font-size:14px;line-height:16.8px;font-weight:400;color:#f2f2f2;left:699.3px;width:600px;text-align:right;">2&#8217;466.02</div>
<div class="t" style="top:229.61px;font-size:14px;line-height:16.8px;font-weight:400;color:#f2f2f2;left:809.3px;width:600px;text-align:right;">0.00</div>
<div class="t" style="top:252.67px;font-size:14px;line-height:16.8px;font-weight:400;color:#f2f2f2;letter-spacing:0.05px;left:606px;">31.01.2017</div>
<div class="t" style="top:252.67px;font-size:14px;line-height:16.8px;font-weight:400;color:#f2f2f2;letter-spacing:0.03px;left:694.2px;width:127px;overflow:hidden">Kreditorenrechnung</div>
<div class="t" style="top:252.67px;font-size:14px;line-height:16.8px;font-weight:400;color:#f2f2f2;letter-spacing:-0.15px;left:826px;">ER-2017-1008</div>
<div class="t" style="top:252.67px;font-size:14px;line-height:16.8px;font-weight:400;color:#f2f2f2;letter-spacing:-0.85px;left:935.7px;">BIKEANDMORE</div>
<div class="t" style="top:252.67px;font-size:14px;line-height:16.8px;font-weight:400;color:#f2f2f2;letter-spacing:-0.13px;left:1067.5px;">Einkauf Nr.: ER-20...</div>
<div class="t" style="top:252.67px;font-size:14px;line-height:16.8px;font-weight:400;color:#f2f2f2;left:699.3px;width:600px;text-align:right;">2&#8217;466.02</div>
<div class="t" style="top:252.67px;font-size:14px;line-height:16.8px;font-weight:400;color:#f2f2f2;left:809.3px;width:600px;text-align:right;">0.00</div>
<svg style="left:580.6px;top:275.88px" width="13" height="13" viewBox="0 0 24 24"><path d="M12 1.6 L15 8.4 L22.4 9.1 L16.8 14.1 L18.4 21.4 L12 17.6 L5.6 21.4 L7.2 14.1 L1.6 9.1 L9 8.4 Z" fill="#dcdcdc" stroke="#dcdcdc" stroke-width="1.2" stroke-linejoin="round"/></svg>
<div class="t" style="top:275.73px;font-size:14px;line-height:16.8px;font-weight:400;color:#f2f2f2;letter-spacing:0.05px;left:606px;">01.02.2017</div>
<div class="t" style="top:275.73px;font-size:14px;line-height:16.8px;font-weight:400;color:#f2f2f2;letter-spacing:-0.26px;left:694.2px;width:127px;overflow:hidden">Rechnung</div>
<div class="t" style="top:275.73px;font-size:14px;line-height:16.8px;font-weight:400;color:#f2f2f2;letter-spacing:-0.15px;left:826px;">R-2017-1036</div>
<div class="t" style="top:275.73px;font-size:14px;line-height:16.8px;font-weight:400;color:#f2f2f2;letter-spacing:-0.45px;left:935.7px;">ALHAMBRA SOCI...</div>
<div class="t" style="top:275.73px;font-size:14px;line-height:16.8px;font-weight:400;color:#f2f2f2;left:699.3px;width:600px;text-align:right;">1&#8217;293.00</div>
<div class="t" style="top:275.73px;font-size:14px;line-height:16.8px;font-weight:400;color:#f2f2f2;left:809.3px;width:600px;text-align:right;">0.00</div>
<div class="t" style="top:298.79px;font-size:14px;line-height:16.8px;font-weight:400;color:#f2f2f2;letter-spacing:0.05px;left:606px;">01.02.2017</div>
<div class="t" style="top:298.79px;font-size:14px;line-height:16.8px;font-weight:400;color:#f2f2f2;letter-spacing:0.02px;left:694.2px;width:127px;overflow:hidden">Debitorenrechnung</div>
<div class="t" style="top:298.79px;font-size:14px;line-height:16.8px;font-weight:400;color:#f2f2f2;letter-spacing:-0.15px;left:826px;">R-2017-1036</div>
<div class="t" style="top:298.79px;font-size:14px;line-height:16.8px;font-weight:400;color:#f2f2f2;letter-spacing:-0.45px;left:935.7px;">ALHAMBRA SOCI...</div>
<div class="t" style="top:298.79px;font-size:14px;line-height:16.8px;font-weight:400;color:#f2f2f2;letter-spacing:-0.12px;left:1067.5px;">Rechnung Nr.: R-2...</div>
<div class="t" style="top:298.79px;font-size:14px;line-height:16.8px;font-weight:400;color:#f2f2f2;left:699.3px;width:600px;text-align:right;">1&#8217;293.00</div>
<div class="t" style="top:298.79px;font-size:14px;line-height:16.8px;font-weight:400;color:#f2f2f2;left:809.3px;width:600px;text-align:right;">0.00</div>
<svg style="left:580.6px;top:322.0px" width="13" height="13" viewBox="0 0 24 24"><path d="M12 1.6 L15 8.4 L22.4 9.1 L16.8 14.1 L18.4 21.4 L12 17.6 L5.6 21.4 L7.2 14.1 L1.6 9.1 L9 8.4 Z" fill="#dcdcdc" stroke="#dcdcdc" stroke-width="1.2" stroke-linejoin="round"/></svg>
<div class="t" style="top:321.85px;font-size:14px;line-height:16.8px;font-weight:400;color:#f2f2f2;letter-spacing:0.05px;left:606px;">10.04.2017</div>
<div class="t" style="top:321.85px;font-size:14px;line-height:16.8px;font-weight:400;color:#f2f2f2;letter-spacing:-0.04px;left:694.2px;width:127px;overflow:hidden">Bestellung</div>
<div class="t" style="top:321.85px;font-size:14px;line-height:16.8px;font-weight:400;color:#f2f2f2;letter-spacing:-0.15px;left:826px;">B-2017-1003</div>
<div class="t" style="top:321.85px;font-size:14px;line-height:16.8px;font-weight:400;color:#f2f2f2;letter-spacing:-0.85px;left:935.7px;">BIKEANDMORE</div>
<div class="t" style="top:321.85px;font-size:14px;line-height:16.8px;font-weight:400;color:#f2f2f2;left:699.3px;width:600px;text-align:right;">2&#8217;466.02</div>
<div class="t" style="top:321.85px;font-size:14px;line-height:16.8px;font-weight:400;color:#f2f2f2;left:809.3px;width:600px;text-align:right;">0.00</div>
<svg style="left:580.6px;top:345.05999999999995px" width="13" height="13" viewBox="0 0 24 24"><path d="M12 1.6 L15 8.4 L22.4 9.1 L16.8 14.1 L18.4 21.4 L12 17.6 L5.6 21.4 L7.2 14.1 L1.6 9.1 L9 8.4 Z" fill="#dcdcdc" stroke="#dcdcdc" stroke-width="1.2" stroke-linejoin="round"/></svg>
<div class="t" style="top:344.91px;font-size:14px;line-height:16.8px;font-weight:400;color:#f2f2f2;letter-spacing:0.05px;left:606px;">02.02.2018</div>
<div class="t" style="top:344.91px;font-size:14px;line-height:16.8px;font-weight:400;color:#f2f2f2;letter-spacing:-0.12px;left:694.2px;width:127px;overflow:hidden">Eingangsrechnung</div>
<div class="t" style="top:344.91px;font-size:14px;line-height:16.8px;font-weight:400;color:#f2f2f2;letter-spacing:-0.15px;left:826px;">ER-2018-1008</div>
<div class="t" style="top:344.91px;font-size:14px;line-height:16.8px;font-weight:400;color:#f2f2f2;letter-spacing:-0.85px;left:935.7px;">BIKEANDMORE</div>
<div class="t" style="top:344.91px;font-size:14px;line-height:16.8px;font-weight:400;color:#f2f2f2;left:699.3px;width:600px;text-align:right;">2&#8217;459.17</div>
<div class="t" style="top:344.91px;font-size:14px;line-height:16.8px;font-weight:400;color:#f2f2f2;left:809.3px;width:600px;text-align:right;">0.00</div>
<div class="t" style="top:367.97px;font-size:14px;line-height:16.8px;font-weight:400;color:#f2f2f2;letter-spacing:0.05px;left:606px;">02.02.2018</div>
<div class="t" style="top:367.97px;font-size:14px;line-height:16.8px;font-weight:400;color:#f2f2f2;letter-spacing:0.03px;left:694.2px;width:127px;overflow:hidden">Kreditorenrechnung</div>
<div class="t" style="top:367.97px;font-size:14px;line-height:16.8px;font-weight:400;color:#f2f2f2;letter-spacing:-0.15px;left:826px;">ER-2018-1008</div>
<div class="t" style="top:367.97px;font-size:14px;line-height:16.8px;font-weight:400;color:#f2f2f2;letter-spacing:-0.85px;left:935.7px;">BIKEANDMORE</div>
<div class="t" style="top:367.97px;font-size:14px;line-height:16.8px;font-weight:400;color:#f2f2f2;letter-spacing:-0.13px;left:1067.5px;">Einkauf Nr.: ER-20...</div>
<div class="t" style="top:367.97px;font-size:14px;line-height:16.8px;font-weight:400;color:#f2f2f2;left:699.3px;width:600px;text-align:right;">2&#8217;459.17</div>
<div class="t" style="top:367.97px;font-size:14px;line-height:16.8px;font-weight:400;color:#f2f2f2;left:809.3px;width:600px;text-align:right;">0.00</div>
<svg style="left:580.6px;top:391.17999999999995px" width="13" height="13" viewBox="0 0 24 24"><path d="M12 1.6 L15 8.4 L22.4 9.1 L16.8 14.1 L18.4 21.4 L12 17.6 L5.6 21.4 L7.2 14.1 L1.6 9.1 L9 8.4 Z" fill="#dcdcdc" stroke="#dcdcdc" stroke-width="1.2" stroke-linejoin="round"/></svg>
<div class="t" style="top:391.03px;font-size:14px;line-height:16.8px;font-weight:400;color:#f2f2f2;letter-spacing:0.05px;left:606px;">02.02.2019</div>
<div class="t" style="top:391.03px;font-size:14px;line-height:16.8px;font-weight:400;color:#f2f2f2;letter-spacing:-0.12px;left:694.2px;width:127px;overflow:hidden">Eingangsrechnung</div>
<div class="t" style="top:391.03px;font-size:14px;line-height:16.8px;font-weight:400;color:#f2f2f2;letter-spacing:-0.15px;left:826px;">ER-2019-1009</div>
<div class="t" style="top:391.03px;font-size:14px;line-height:16.8px;font-weight:400;color:#f2f2f2;letter-spacing:-0.85px;left:935.7px;">BIKEANDMORE</div>
<div class="t" style="top:391.03px;font-size:14px;line-height:16.8px;font-weight:400;color:#f2f2f2;left:699.3px;width:600px;text-align:right;">2&#8217;459.17</div>
<div class="t" style="top:391.03px;font-size:14px;line-height:16.8px;font-weight:400;color:#f2f2f2;left:809.3px;width:600px;text-align:right;">0.00</div>
<div class="t" style="top:414.09px;font-size:14px;line-height:16.8px;font-weight:400;color:#f2f2f2;letter-spacing:0.05px;left:606px;">02.02.2019</div>
<div class="t" style="top:414.09px;font-size:14px;line-height:16.8px;font-weight:400;color:#f2f2f2;letter-spacing:0.03px;left:694.2px;width:127px;overflow:hidden">Kreditorenrechnung</div>
<div class="t" style="top:414.09px;font-size:14px;line-height:16.8px;font-weight:400;color:#f2f2f2;letter-spacing:-0.15px;left:826px;">ER-2019-1009</div>
<div class="t" style="top:414.09px;font-size:14px;line-height:16.8px;font-weight:400;color:#f2f2f2;letter-spacing:-0.85px;left:935.7px;">BIKEANDMORE</div>
<div class="t" style="top:414.09px;font-size:14px;line-height:16.8px;font-weight:400;color:#f2f2f2;letter-spacing:-0.13px;left:1067.5px;">Einkauf Nr.: ER-20...</div>
<div class="t" style="top:414.09px;font-size:14px;line-height:16.8px;font-weight:400;color:#f2f2f2;left:699.3px;width:600px;text-align:right;">2&#8217;459.17</div>
<div class="t" style="top:414.09px;font-size:14px;line-height:16.8px;font-weight:400;color:#f2f2f2;left:809.3px;width:600px;text-align:right;">0.00</div>
<svg style="left:527px;top:438.4px" width="14" height="14" viewBox="0 0 14 14"><rect x="1.9" y="1.9" width="5.2" height="5.2" rx="1.6" transform="rotate(45 4.5 4.5)" fill="none" stroke="#b0b0b0" stroke-width="1.2"/><rect x="6.9" y="6.9" width="5.2" height="5.2" rx="1.6" transform="rotate(45 9.5 9.5)" fill="none" stroke="#b0b0b0" stroke-width="1.2"/></svg>
<svg style="left:580.6px;top:437.29999999999995px" width="13" height="13" viewBox="0 0 24 24"><path d="M12 1.6 L15 8.4 L22.4 9.1 L16.8 14.1 L18.4 21.4 L12 17.6 L5.6 21.4 L7.2 14.1 L1.6 9.1 L9 8.4 Z" fill="#dcdcdc" stroke="#dcdcdc" stroke-width="1.2" stroke-linejoin="round"/></svg>
<div class="t" style="top:437.15px;font-size:14px;line-height:16.8px;font-weight:400;color:#f2f2f2;letter-spacing:0.05px;left:606px;">02.02.2019</div>
<div class="t" style="top:437.15px;font-size:14px;line-height:16.8px;font-weight:400;color:#f2f2f2;letter-spacing:0.03px;left:694.2px;width:127px;overflow:hidden">Kreditorenrechnung</div>
<div class="t" style="top:437.15px;font-size:14px;line-height:16.8px;font-weight:400;color:#f2f2f2;letter-spacing:-0.15px;left:826px;">ER-2019-1009</div>
<div class="t" style="top:437.15px;font-size:14px;line-height:16.8px;font-weight:400;color:#f2f2f2;letter-spacing:-0.85px;left:935.7px;">BIKEANDMORE</div>
<div class="t" style="top:437.15px;font-size:14px;line-height:16.8px;font-weight:400;color:#f2f2f2;letter-spacing:-0.13px;left:1067.5px;">Einkauf Nr.: ER-20...</div>
<div class="t" style="top:437.15px;font-size:14px;line-height:16.8px;font-weight:400;color:#f2f2f2;left:699.3px;width:600px;text-align:right;">2&#8217;459.17</div>
<div class="t" style="top:437.15px;font-size:14px;line-height:16.8px;font-weight:400;color:#f2f2f2;left:809.3px;width:600px;text-align:right;">0.00</div>
<svg style="left:580.6px;top:460.36px" width="13" height="13" viewBox="0 0 24 24"><path d="M12 1.6 L15 8.4 L22.4 9.1 L16.8 14.1 L18.4 21.4 L12 17.6 L5.6 21.4 L7.2 14.1 L1.6 9.1 L9 8.4 Z" fill="#dcdcdc" stroke="#dcdcdc" stroke-width="1.2" stroke-linejoin="round"/></svg>
<div class="t" style="top:460.21px;font-size:14px;line-height:16.8px;font-weight:400;color:#f2f2f2;letter-spacing:0.05px;left:606px;">03.02.2020</div>
<div class="t" style="top:460.21px;font-size:14px;line-height:16.8px;font-weight:400;color:#f2f2f2;letter-spacing:-0.12px;left:694.2px;width:127px;overflow:hidden">Eingangsrechnung</div>
<div class="t" style="top:460.21px;font-size:14px;line-height:16.8px;font-weight:400;color:#f2f2f2;letter-spacing:-0.15px;left:826px;">ER-2020-1010</div>
<div class="t" style="top:460.21px;font-size:14px;line-height:16.8px;font-weight:400;color:#f2f2f2;letter-spacing:-0.85px;left:935.7px;">BIKEANDMORE</div>
<div class="t" style="top:460.21px;font-size:14px;line-height:16.8px;font-weight:400;color:#f2f2f2;left:699.3px;width:600px;text-align:right;">2&#8217;459.17</div>
<div class="t" style="top:460.21px;font-size:14px;line-height:16.8px;font-weight:400;color:#f2f2f2;left:809.3px;width:600px;text-align:right;">0.00</div>
<div class="t" style="top:483.27px;font-size:14px;line-height:16.8px;font-weight:400;color:#f2f2f2;letter-spacing:0.05px;left:606px;">03.02.2020</div>
<div class="t" style="top:483.27px;font-size:14px;line-height:16.8px;font-weight:400;color:#f2f2f2;letter-spacing:0.03px;left:694.2px;width:127px;overflow:hidden">Kreditorenrechnung</div>
<div class="t" style="top:483.27px;font-size:14px;line-height:16.8px;font-weight:400;color:#f2f2f2;letter-spacing:-0.15px;left:826px;">ER-2020-1010</div>
<div class="t" style="top:483.27px;font-size:14px;line-height:16.8px;font-weight:400;color:#f2f2f2;letter-spacing:-0.85px;left:935.7px;">BIKEANDMORE</div>
<div class="t" style="top:483.27px;font-size:14px;line-height:16.8px;font-weight:400;color:#f2f2f2;letter-spacing:-0.13px;left:1067.5px;">Einkauf Nr.: ER-20...</div>
<div class="t" style="top:483.27px;font-size:14px;line-height:16.8px;font-weight:400;color:#f2f2f2;left:699.3px;width:600px;text-align:right;">2&#8217;459.17</div>
<div class="t" style="top:483.27px;font-size:14px;line-height:16.8px;font-weight:400;color:#f2f2f2;left:809.3px;width:600px;text-align:right;">0.00</div>
<div style="left:523px;top:818px;width:1299px;height:1px;background:#6a6a6a"></div>
<div style="left:523px;top:819px;width:1299px;height:37px;background:#2c2c2c"></div>
<svg style="left:534.5px;top:826.5px" width="20" height="20" viewBox="0 0 24 24"><path d="M12 1.6 L15 8.4 L22.4 9.1 L16.8 14.1 L18.4 21.4 L12 17.6 L5.6 21.4 L7.2 14.1 L1.6 9.1 L9 8.4 Z" fill="#d0d0d0" stroke="#d0d0d0" stroke-width="1.2" stroke-linejoin="round"/></svg>
<div class="t" style="top:829.74px;font-size:15.7px;line-height:18.84px;font-weight:400;color:#ececec;left:564.7px;">Abrechnung: Kanal 2. Etappe</div>
<div style="left:523px;top:856px;width:1299px;height:1px;background:#5e5e5e"></div>
<div style="left:523px;top:857px;width:1299px;height:25px;background:linear-gradient(180deg,#3c3c3c,#383838)"></div>
<div style="left:523px;top:882px;width:1299px;height:1px;background:#5a5a5a"></div>
<div style="left:1238.5px;top:860px;width:1px;height:19px;background:#4a4a4a"></div>
<div style="left:1355px;top:860px;width:1px;height:19px;background:#4a4a4a"></div>
<div style="left:1471.5px;top:860px;width:1px;height:19px;background:#4a4a4a"></div>
<div style="left:1588px;top:860px;width:1px;height:19px;background:#4a4a4a"></div>
<div style="left:1704px;top:860px;width:1px;height:19px;background:#4a4a4a"></div>
<div class="t" style="top:861.75px;font-size:14px;line-height:16.8px;font-weight:400;color:#ececec;left:749.5999999999999px;width:600px;text-align:right;">Netto CHF</div>
<div class="t" style="top:861.75px;font-size:14px;line-height:16.8px;font-weight:400;color:#ececec;left:865.9000000000001px;width:600px;text-align:right;">Brutto CHF</div>
<div class="t" style="top:861.75px;font-size:14px;line-height:16.8px;font-weight:400;color:#ececec;left:982.4000000000001px;width:600px;text-align:right;">Netto CHF</div>
<div class="t" style="top:861.75px;font-size:14px;line-height:16.8px;font-weight:400;color:#ececec;left:1098.7px;width:600px;text-align:right;">Brutto CHF</div>
<div class="t" style="top:861.75px;font-size:14px;line-height:16.8px;font-weight:400;color:#ececec;left:1215px;width:600px;text-align:right;">Bezahlt CHF</div>
<div style="left:523px;top:883px;width:1299px;height:122px;background:#1f1f1f"></div>
<div style="left:1471.5px;top:883px;width:350.5px;height:44.5px;background:#2e3035"></div>
<div style="left:1238.5px;top:928.5px;width:233px;height:45.5px;background:#2e3035"></div>
<div style="left:523px;top:927.5px;width:1299px;height:1px;background:#5a5a5a"></div>
<div style="left:523px;top:974px;width:1299px;height:1px;background:#5a5a5a"></div>
<div style="left:1238.5px;top:883px;width:1px;height:115px;background:#4e4e4e"></div>
<div style="left:1355px;top:883px;width:1px;height:115px;background:#4e4e4e"></div>
<div style="left:1471.5px;top:883px;width:1px;height:115px;background:#4e4e4e"></div>
<div style="left:1588px;top:883px;width:1px;height:115px;background:#4e4e4e"></div>
<div style="left:1704px;top:883px;width:1px;height:115px;background:#4e4e4e"></div>
<div style="left:523px;top:998px;width:1299px;height:7px;background:#1b1b1b"></div>
<div class="t" style="top:885.65px;font-size:14px;line-height:16.8px;font-weight:400;color:#f0f0f0;left:633.3px;width:600px;text-align:right;">Kosten kalkuliert:</div>
<div class="t" style="top:909.55px;font-size:14px;line-height:16.8px;font-weight:400;color:#f0f0f0;left:633.3px;width:600px;text-align:right;">Erlöse kalkuliert:</div>
<div class="t" style="top:932.35px;font-size:14px;line-height:16.8px;font-weight:400;color:#f0f0f0;left:633.3px;width:600px;text-align:right;">Kosten berechnet:</div>
<div class="t" style="top:955.25px;font-size:14px;line-height:16.8px;font-weight:400;color:#f0f0f0;left:633.3px;width:600px;text-align:right;">Erlöse berechnet:</div>
<div class="t b" style="top:978.45px;font-size:14px;line-height:16.8px;font-weight:700;color:#f0f0f0;left:633.3px;width:600px;text-align:right;">Ergebnis:</div>
<div class="t" style="top:885.65px;font-size:14px;line-height:16.8px;font-weight:400;color:#f0f0f0;left:749.5999999999999px;width:600px;text-align:right;">2283.35</div>
<div class="t" style="top:909.55px;font-size:14px;line-height:16.8px;font-weight:400;color:#f0f0f0;left:749.5999999999999px;width:600px;text-align:right;">3586.11</div>
<div class="t" style="top:885.65px;font-size:14px;line-height:16.8px;font-weight:400;color:#f0f0f0;left:865.9000000000001px;width:600px;text-align:right;">2466.02</div>
<div class="t" style="top:909.55px;font-size:14px;line-height:16.8px;font-weight:400;color:#f0f0f0;left:865.9000000000001px;width:600px;text-align:right;">3873.00</div>
<div class="t" style="top:932.35px;font-size:14px;line-height:16.8px;font-weight:400;color:#f0f0f0;left:982.4000000000001px;width:600px;text-align:right;">11416.75</div>
<div class="t" style="top:955.25px;font-size:14px;line-height:16.8px;font-weight:400;color:#f0f0f0;left:982.4000000000001px;width:600px;text-align:right;">1197.22</div>
<div class="t" style="top:932.35px;font-size:14px;line-height:16.8px;font-weight:400;color:#f0f0f0;left:1098.7px;width:600px;text-align:right;">12302.70</div>
<div class="t" style="top:955.25px;font-size:14px;line-height:16.8px;font-weight:400;color:#f0f0f0;left:1098.7px;width:600px;text-align:right;">1293.00</div>
<div class="t" style="top:932.35px;font-size:14px;line-height:16.8px;font-weight:400;color:#f0f0f0;left:1215px;width:600px;text-align:right;">-,--</div>
<div class="t" style="top:955.25px;font-size:14px;line-height:16.8px;font-weight:400;color:#f0f0f0;left:1215px;width:600px;text-align:right;">-,--</div>
<div class="t b" style="top:978.45px;font-size:14px;line-height:16.8px;font-weight:700;color:#f0f0f0;left:749.5999999999999px;width:600px;text-align:right;">1302.76</div>
<div class="t b" style="top:978.45px;font-size:14px;line-height:16.8px;font-weight:700;color:#f0f0f0;left:865.9000000000001px;width:600px;text-align:right;">1406.98</div>
<div class="t b" style="top:978.45px;font-size:14px;line-height:16.8px;font-weight:700;color:#f03a30;left:982.4000000000001px;width:600px;text-align:right;">-10219.53</div>
<div class="t b" style="top:978.45px;font-size:14px;line-height:16.8px;font-weight:700;color:#f03a30;left:1098.7px;width:600px;text-align:right;">-11009.70</div>
<div class="t b" style="top:978.45px;font-size:14px;line-height:16.8px;font-weight:700;color:#f0f0f0;left:1215px;width:600px;text-align:right;">0.00</div>
<div style="left:269px;top:1006px;width:1553px;height:25px;background:#272727"></div>
<div class="t" style="top:1010.13px;font-size:13.6px;line-height:16.32px;font-weight:400;color:#e8e8e8;left:644px;width:800px;text-align:center;">1 von 2 ausgewählt</div>
</div></div>
<div style="left:15px;top:8px;width:1807px;height:1023px;border-radius:10px;border:1px solid #9a9a9a;box-shadow:0 0 0 1px rgba(0,0,0,.55),0 5px 14px rgba(0,0,0,.32)"></div></body></html>
